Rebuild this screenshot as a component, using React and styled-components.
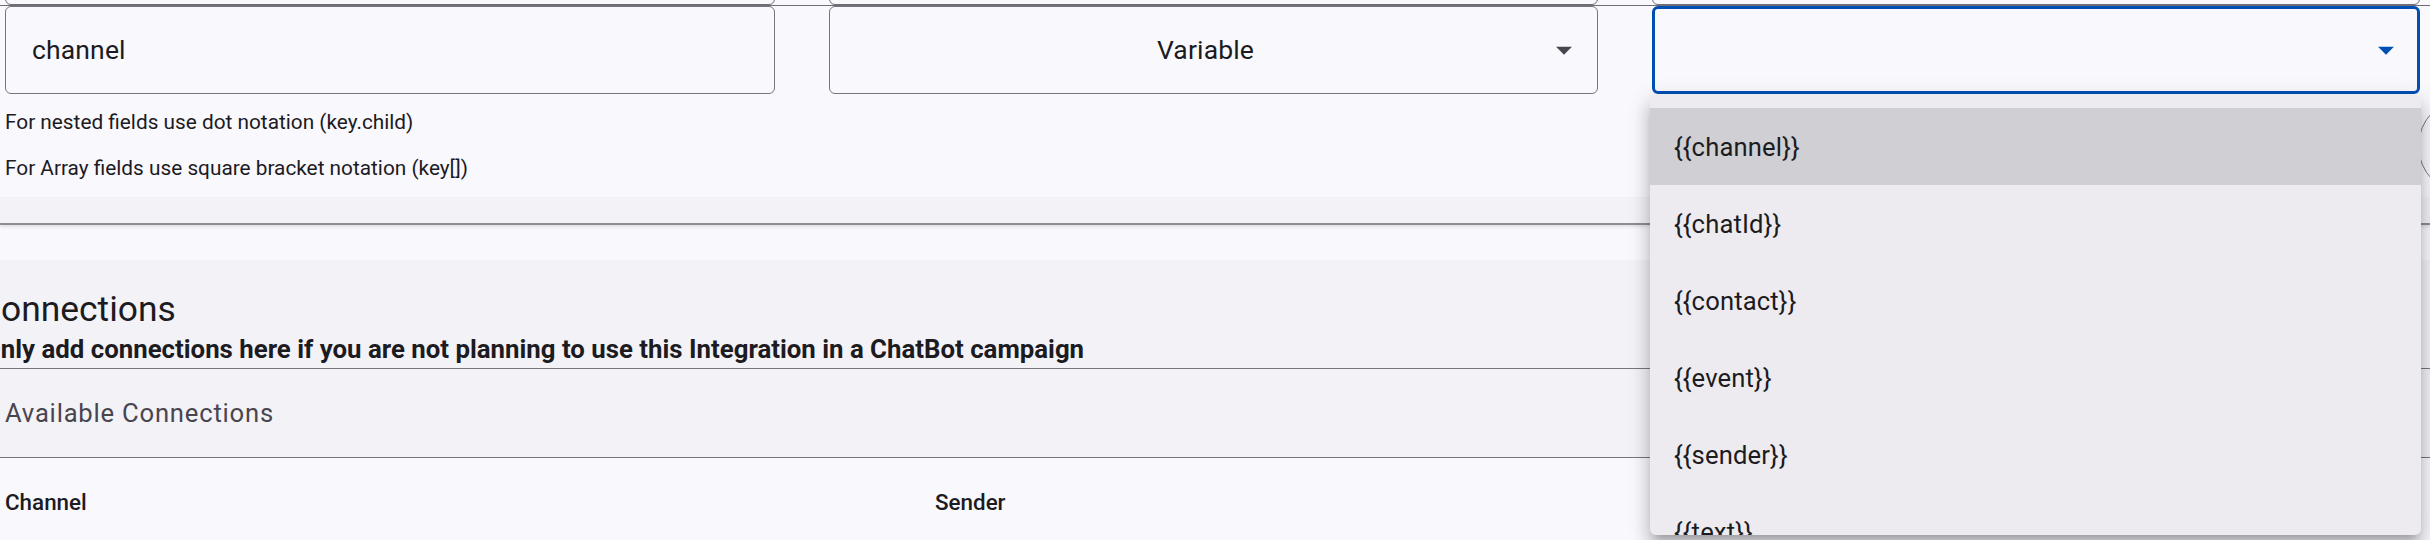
import React from "react";
import styled, { createGlobalStyle } from "styled-components";

const GlobalStyle = createGlobalStyle`
  html, body { margin: 0; padding: 0; background: #f9f8fd; }
  body {
    width: 2430px;
    height: 540px;
    overflow: hidden;
    font-family: Roboto, "Noto Sans", Arial, sans-serif;
    color: #1c1b1f;
  }
  * { box-sizing: border-box; }
`;

const Page = styled.div`
  position: relative;
  width: 2430px;
  height: 540px;
  overflow: hidden;
  background: #f9f8fd;
`;

const FieldsSection = styled.section`
  padding-bottom: 13px;
`;

const PrevRow = styled.div`
  height: 5px;
  overflow: hidden;
  display: flex;
  align-items: flex-end;
  padding-left: 5px;
`;

const GhostBox = styled.div`
  flex-shrink: 0;
  width: ${(p) => p.$w}px;
  margin-left: ${(p) => p.$ml}px;
  height: 88px;
  border: 1px solid #6f6e76;
  border-radius: 6px;
`;

const Rule = styled.div`
  height: 1px;
  background: #6f6e76;
`;

const FieldRow = styled.div`
  display: flex;
  padding-left: 5px;
`;

const FieldBox = styled.div`
  flex-shrink: 0;
  width: ${(p) => p.$w}px;
  margin-left: ${(p) => p.$ml}px;
  height: 88px;
  display: flex;
  align-items: center;
  padding: 0 ${(p) => (p.$focused ? 12 : 14)}px 0 ${(p) => (p.$focused ? 24 : 26)}px;
  border: ${(p) => (p.$focused ? "3px solid #0050b4" : "1px solid #79747e")};
  border-radius: 6px;
  font-size: 26.5px;
  line-height: 1.4375;
  letter-spacing: 0.15px;
  color: #1c1b1f;
`;

const FieldValue = styled.span`
  flex: 1;
  text-align: ${(p) => (p.$center ? "center" : "left")};
  padding-left: ${(p) => (p.$center ? 10 : 0)}px;
  white-space: nowrap;
`;

const ArrowIcon = styled.svg`
  width: 38px;
  height: 38px;
  flex-shrink: 0;
  fill: ${(p) => p.$color};
`;

const Helper = styled.p`
  margin: ${(p) => p.$mt}px 0 0;
  padding-left: 5px;
  font-size: 20.8px;
  line-height: 32px;
  color: #1c1b1f;
`;

const Band = styled.div`
  height: 28px;
  background: #f3f2f7;
  border-bottom: 2px solid #8e8d94;
  box-shadow: 0 2px 3px rgba(0, 0, 0, 0.1);
`;

const Panel = styled.section`
  margin-top: 35px;
  background: #f3f2f7;
  padding-top: 29px;
`;

const Title = styled.h2`
  margin: 0 0 0 -22px;
  font-size: 35.4px;
  line-height: 41px;
  font-weight: 400;
  color: #1c1b1f;
`;

const Subtitle = styled.p`
  margin: 0 0 0 -17px;
  font-size: 25.8px;
  line-height: 38.4px;
  font-weight: 700;
  color: #1c1b1f;
  white-space: nowrap;
`;

const PanelHeader = styled.div`
  height: 90px;
  display: flex;
  align-items: center;
  padding-left: 5px;
  border-top: 1px solid #79747e;
  border-bottom: 1px solid #79747e;
  font-size: 25.6px;
  letter-spacing: 0.8px;
  color: #49454f;
`;

const TableHead = styled.div`
  display: grid;
  grid-template-columns: 930px 1fr;
  padding: 28px 0 0 5px;
  font-size: 22.4px;
  line-height: 33.6px;
  font-weight: 500;
  color: #1c1b1f;
`;

const CircleButton = styled.div`
  position: absolute;
  left: 2418px;
  top: 98px;
  width: 96px;
  height: 96px;
  border: 1px solid #79747e;
  border-radius: 50%;
  z-index: 1;
`;

const Menu = styled.ul`
  position: absolute;
  left: 1650px;
  top: 95px;
  width: 771px;
  height: 440px;
  margin: 0;
  padding: 13px 0 0;
  list-style: none;
  overflow: hidden;
  background: #edebf0;
  border-radius: 6px;
  box-shadow: 0 8px 8px -5px rgba(0, 0, 0, 0.2), 0 13px 16px 2px rgba(0, 0, 0, 0.14),
    0 5px 22px 3px rgba(0, 0, 0, 0.12);
  z-index: 2;
`;

const MenuItem = styled.li`
  height: 77px;
  display: flex;
  align-items: center;
  padding-left: 24px;
  font-size: 25.6px;
  letter-spacing: 0.15px;
  color: #1c1b1f;
  background: ${(p) => (p.$active ? "#d0cfd4" : "transparent")};
`;

const Arrow = ({ color }) => (
  <ArrowIcon viewBox="0 0 24 24" $color={color}>
    <path d="M7 10l5 5 5-5z" />
  </ArrowIcon>
);

const columns = [
  { w: 770, ml: 0 },
  { w: 769, ml: 54 },
  { w: 768, ml: 54 },
];

const options = ["{{channel}}", "{{chatId}}", "{{contact}}", "{{event}}", "{{sender}}", "{{text}}", "{{type}}"];

export default function App() {
  return (
    <>
      <GlobalStyle />
      <Page>
        <FieldsSection>
          <PrevRow>
            {columns.map((c, i) => (
              <GhostBox key={i} $w={c.w} $ml={c.ml} />
            ))}
          </PrevRow>
          <Rule />
          <FieldRow>
            <FieldBox $w={columns[0].w} $ml={columns[0].ml}>
              <FieldValue>channel</FieldValue>
            </FieldBox>
            <FieldBox $w={columns[1].w} $ml={columns[1].ml}>
              <FieldValue $center>Variable</FieldValue>
              <Arrow color="#49454f" />
            </FieldBox>
            <FieldBox $w={columns[2].w} $ml={columns[2].ml} $focused>
              <FieldValue />
              <Arrow color="#0050b4" />
            </FieldBox>
          </FieldRow>
          <Helper $mt={12}>For nested fields use dot notation (key.child)</Helper>
          <Helper $mt={14}>For Array fields use square bracket notation (key[])</Helper>
        </FieldsSection>
        <Band />
        <Panel>
          <Title>Connections</Title>
          <Subtitle>
            Only add connections here if you are not planning to use this Integration in a ChatBot campaign
          </Subtitle>
          <PanelHeader>Available Connections</PanelHeader>
        </Panel>
        <TableHead>
          <span>Channel</span>
          <span>Sender</span>
        </TableHead>
        <CircleButton />
        <Menu>
          {options.map((o, i) => (
            <MenuItem key={o} $active={i === 0}>
              {o}
            </MenuItem>
          ))}
        </Menu>
      </Page>
    </>
  );
}
